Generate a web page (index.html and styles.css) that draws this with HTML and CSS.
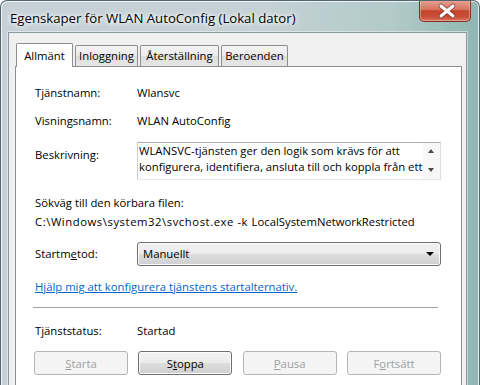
FILE: index.html
```html
<!DOCTYPE html>
<html lang="sv">
<head>
    <meta charset="UTF-8">
    <meta name="viewport" content="width=device-width, initial-scale=1.0">
    <title>Egenskaper för WLAN AutoConfig (Lokal dator)</title>
    <link rel="stylesheet" href="styles.css">
</head>
<body>
    <div class="window">
        <div class="titlebar">
            <span class="title">Egenskaper för WLAN AutoConfig (Lokal dator)</span>
            <button class="close" aria-label="Stäng">
                <svg width="52" height="21" viewBox="0 0 52 21">
                    <path d="M22 6 L34 16 M34 6 L22 16" stroke="#6e2b20" stroke-width="5" stroke-linecap="round" opacity="0.55"/>
                    <path d="M22 6 L34 16 M34 6 L22 16" stroke="#ffffff" stroke-width="3" stroke-linecap="round"/>
                </svg>
            </button>
        </div>

        <div class="client">
            <div class="tabs">
                <div class="tab active">Allmänt</div>
                <div class="tab">Inloggning</div>
                <div class="tab">Återställning</div>
                <div class="tab">Beroenden</div>
            </div>

            <div class="panel">
                <div class="row first">
                    <span class="label">Tjänstnamn:</span>
                    <span>Wlansvc</span>
                </div>
                <div class="row">
                    <span class="label">Visningsnamn:</span>
                    <span>WLAN AutoConfig</span>
                </div>
                <div class="row desc-row">
                    <span class="label">Beskrivning:</span>
                    <div class="textbox">
                        <div class="textbox-text">WLANSVC-tjänsten ger den logik som krävs för att<br>konfigurera, identifiera, ansluta till och koppla från ett</div>
                        <div class="scrollbar">
                            <span class="arrow up"></span>
                            <span class="arrow down"></span>
                        </div>
                    </div>
                </div>

                <div class="path-label">Sökväg till den körbara filen:</div>
                <div class="path-value"><span class="path-dir">C:\Windows\system32\svchost.exe -k </span>LocalSystemNetworkRestricted</div>

                <div class="row select-row">
                    <span class="label">Startm<u>e</u>tod:</span>
                    <div class="combo">
                        <span>Manuellt</span>
                        <span class="combo-arrow"></span>
                    </div>
                </div>

                <a class="help-link" href="#">Hjälp mig att konfigurera tjänstens startalternativ.</a>

                <div class="separator"></div>

                <div class="row status-row">
                    <span class="label">Tjänststatus:</span>
                    <span>Startad</span>
                </div>

                <div class="buttons">
                    <button class="btn" disabled><u>S</u>tarta</button>
                    <button class="btn">S<u>t</u>oppa</button>
                    <button class="btn" disabled><u>P</u>ausa</button>
                    <button class="btn" disabled>F<u>o</u>rtsätt</button>
                </div>
            </div>
        </div>
    </div>
</body>
</html>
```

FILE: styles.css
```css
:root {
    --ui-font: "Open Sans", "Noto Sans", sans-serif;
    --text-color: #000000;
    --client-bg: #f0f0f0;
    --panel-border: #8c8e94;
    --link-color: #0066cc;
    --disabled-text: #a0a0a0;
}

* {
    box-sizing: border-box;
}

body {
    margin: 0;
    font-family: var(--ui-font);
    font-size: 11.3px;
    color: var(--text-color);
    background: #ffffff;
}

.window {
    position: relative;
    width: 480px;
    height: 385px;
    display: flex;
    flex-direction: column;
    padding: 0 12px 0 7px;
    border: 1px solid #53656f;
    border-bottom: none;
    border-radius: 7px 7px 0 0;
    overflow: hidden;
    background: linear-gradient(90deg, #c6d0d6 0%, #c4d1d6 55%, #b2cac9 82%, #8fb7b1 100%);
    box-shadow: inset 1px 1px 0 #eef3f5, inset -1px 0 0 #e4eeee;
}

.titlebar {
    height: 31px;
    display: flex;
    align-items: center;
    padding-left: 2px;
    flex: none;
}

.title {
    font-size: 13.2px;
    color: #000000;
    text-shadow: 0 0 8px #ffffff, 0 0 5px #ffffff, 0 0 3px rgba(255, 255, 255, 0.8);
    margin-top: 2px;
}

.close {
    position: absolute;
    top: -1px;
    right: 8px;
    width: 52px;
    height: 22px;
    padding: 0;
    border: 1px solid #7d3024;
    border-top: none;
    border-radius: 0 0 5px 5px;
    background: linear-gradient(180deg, #e6a597 0%, #d8735f 45%, #c4432a 52%, #c9503a 80%, #d9775f 100%);
    box-shadow: inset 0 0 0 1px rgba(255, 210, 200, 0.45);
}

.close svg {
    display: block;
    margin: -1px 0 0 -1px;
}

.client {
    flex: 1;
    display: flex;
    flex-direction: column;
    background: var(--client-bg);
    border: 1px solid #8b98a0;
    border-bottom: none;
    padding: 10px 4px 0 6px;
    box-shadow: 0 0 0 1px rgba(255, 255, 255, 0.45);
}

/* tab strip */
.tabs {
    display: flex;
    align-items: flex-end;
    gap: 2px;
    height: 24px;
    margin-bottom: -1px;
    padding-left: 1px;
    position: relative;
    z-index: 1;
}

.tab {
    height: 21px;
    margin-bottom: 1px;
    padding: 2px 0 0;
    text-align: center;
    border: 1px solid var(--panel-border);
    border-bottom: none;
    border-radius: 2px 2px 0 0;
    background: linear-gradient(180deg, #f3f3f3 0%, #ebebeb 50%, #dedede 51%, #e6e6e6 100%);
    white-space: nowrap;
}

.tab:nth-child(1) { width: 57px; }
.tab:nth-child(2) { width: 63px; }
.tab:nth-child(3) { width: 79px; }
.tab:nth-child(4) { width: 67px; }

.tab.active {
    height: 24px;
    margin-bottom: 0;
    padding-top: 4px;
    background: #ffffff;
}

.panel {
    flex: 1;
    background: #ffffff;
    border: 1px solid var(--panel-border);
    border-bottom: none;
    padding: 18px 20px 0 19px;
}

.row {
    display: flex;
    line-height: 16px;
    margin-top: 12px;
}

.row.first {
    margin-top: 0;
}

.label {
    width: 102px;
    flex: none;
}

/* description box */
.desc-row {
    margin-top: 13px;
}

.desc-row .label {
    padding-top: 5px;
}

.textbox {
    flex: 1;
    height: 38px;
    display: flex;
    border: 1px solid;
    border-color: #abadb3 #dbdfe6 #e3e9ef #c9ccd3;
}

.textbox-text {
    flex: 1;
    padding: 0 0 0 1px;
    line-height: 16px;
    white-space: nowrap;
    overflow: hidden;
}

.scrollbar {
    width: 17px;
    flex: none;
    background: #f7f7f7;
    position: relative;
}

.arrow {
    position: absolute;
    left: 5px;
    width: 0;
    height: 0;
    border-left: 3.5px solid transparent;
    border-right: 3.5px solid transparent;
}

.arrow.up {
    top: 6px;
    border-bottom: 4px solid #4a4a4a;
}

.arrow.down {
    top: 25px;
    border-top: 4px solid #4a4a4a;
}

.path-label {
    margin-top: 15px;
    line-height: 16px;
}

.path-value {
    margin-top: 3px;
    line-height: 16px;
    white-space: nowrap;
}

.path-dir {
    letter-spacing: 0.55px;
}

/* combo box */
.select-row {
    margin-top: 12px;
}

.select-row .label {
    padding-top: 4px;
}

.combo {
    flex: 1;
    height: 24px;
    display: flex;
    align-items: center;
    justify-content: space-between;
    padding: 0 6px 0 5px;
    border: 1px solid #707070;
    border-radius: 3px;
    background: linear-gradient(180deg, #f2f2f2 0%, #ebebeb 50%, #dddddd 51%, #cfcfcf 100%);
    box-shadow: inset 0 0 0 1px #fbfbfb;
}

.combo-arrow {
    width: 0;
    height: 0;
    border-left: 4px solid transparent;
    border-right: 4px solid transparent;
    border-top: 4px solid #000000;
}

.help-link {
    display: block;
    margin-top: 13px;
    line-height: 16px;
    color: var(--link-color);
    text-decoration: underline;
}

.separator {
    height: 1px;
    margin: 12px 3px 0 -2px;
    background: #a0a0a0;
}

.status-row {
    margin-top: 15px;
}

.buttons {
    display: flex;
    justify-content: space-between;
    margin: 12px 0 0 -1px;
}

.btn {
    width: 94px;
    height: 24px;
    padding: 0;
    font-family: var(--ui-font);
    font-size: 11.3px;
    color: var(--text-color);
    border: 1px solid #707070;
    border-radius: 3px;
    background: linear-gradient(180deg, #f2f2f2 0%, #ebebeb 50%, #dddddd 51%, #cfcfcf 100%);
    box-shadow: inset 0 0 0 1px #fbfbfb;
}

.btn:disabled {
    color: var(--disabled-text);
    border-color: #b5b5b5;
    background: #f4f4f4;
    box-shadow: none;
}
```
